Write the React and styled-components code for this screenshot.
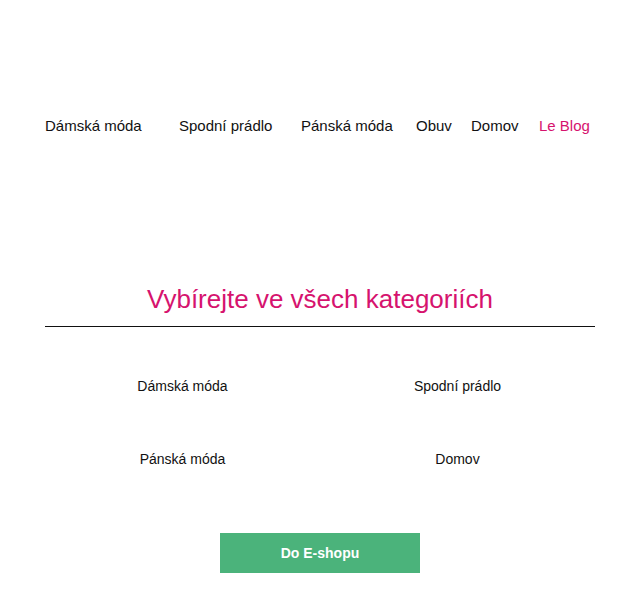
import styled, { createGlobalStyle } from "styled-components";

const GlobalStyle = createGlobalStyle`
  body {
    margin: 0;
    background: #ffffff;
    font-family: "Liberation Sans", Arial, sans-serif;
    color: #111111;
  }
`;

const navLinks = [
  { label: "Dámská móda", width: 134 },
  { label: "Spodní prádlo", width: 122 },
  { label: "Pánská móda", width: 115 },
  { label: "Obuv", width: 55 },
  { label: "Domov", width: 68 },
  { label: "Le Blog", width: 56, accent: true },
];

const categories = ["Dámská móda", "Spodní prádlo", "Pánská móda", "Domov"];

const App = () => {
  return (
    <>
      <GlobalStyle />
      <PageWrap>
        <Nav $columns={navLinks.map((l) => `${l.width}px`).join(" ")}>
          {navLinks.map((link) => (
            <NavLink key={link.label} href="#" $accent={link.accent}>
              {link.label}
            </NavLink>
          ))}
        </Nav>

        <Section>
          <SectionTitle>Vybírejte ve všech kategoriích</SectionTitle>
          <CategoryGrid>
            {categories.map((cat) => (
              <CategoryLink key={cat} href="#">
                {cat}
              </CategoryLink>
            ))}
          </CategoryGrid>
          <ShopButton>Do E-shopu</ShopButton>
        </Section>
      </PageWrap>
    </>
  );
};

export default App;

const PageWrap = styled.div`
  width: 550px;
  margin: 0 auto;
  padding: 116px 0 0;
`;

const Nav = styled.nav`
  display: grid;
  grid-template-columns: ${(p) => p.$columns};
`;

const NavLink = styled.a`
  font-size: 15px;
  line-height: 20px;
  color: ${(p) => (p.$accent ? "#d6136e" : "#111111")};
  text-decoration: none;
  white-space: nowrap;
`;

const Section = styled.section`
  margin-top: 148px;
  display: flex;
  flex-direction: column;
  align-items: center;
`;

const SectionTitle = styled.h2`
  align-self: stretch;
  margin: 0;
  padding-bottom: 12px;
  border-bottom: 1px solid #111111;
  font-size: 26px;
  line-height: 30px;
  font-weight: 400;
  color: #d6136e;
  text-align: center;
`;

const CategoryGrid = styled.div`
  align-self: stretch;
  margin-top: 49px;
  display: grid;
  grid-template-columns: 1fr 1fr;
  row-gap: 53px;
`;

const CategoryLink = styled.a`
  font-size: 14px;
  line-height: 20px;
  color: #111111;
  text-decoration: none;
  text-align: center;
`;

const ShopButton = styled.button`
  margin-top: 64px;
  width: 200px;
  height: 40px;
  border: none;
  background-color: #4bb37b;
  color: #ffffff;
  font-family: "Liberation Sans", Arial, sans-serif;
  font-size: 14px;
  font-weight: 700;
  cursor: pointer;
`;
